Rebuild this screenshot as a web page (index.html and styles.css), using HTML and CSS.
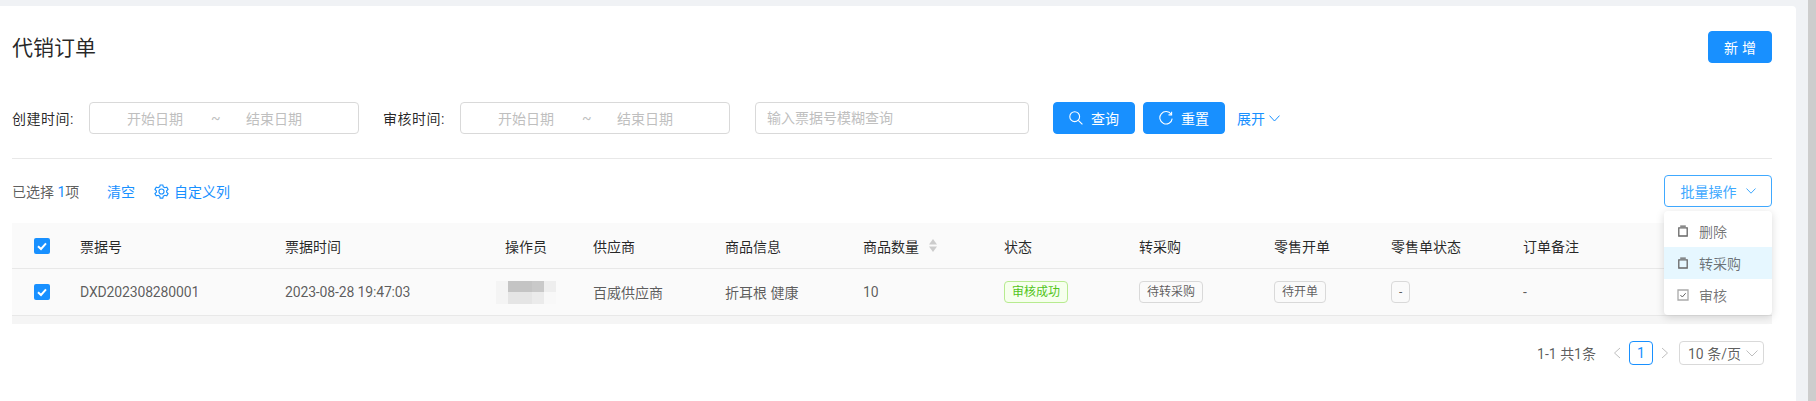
FILE: index.html
```html
<!DOCTYPE html>
<html lang="zh-CN">
<head>
    <meta charset="UTF-8">
    <meta name="viewport" content="width=device-width, initial-scale=1.0">
    <title>代销订单</title>
    <link rel="stylesheet" href="styles.css">
</head>
<body>
    <div class="page">
        <div class="main">
            <div class="card">
                <div class="title-row">
                    <h1 class="title">代销订单</h1>
                    <button class="btn btn-primary btn-add"><span class="spaced">新增</span></button>
                </div>

                <div class="filter-row">
                    <label class="filter-label">创建时间:</label>
                    <div class="range">
                        <span>开始日期</span><span class="tilde">~</span><span>结束日期</span>
                    </div>
                    <label class="filter-label">审核时间:</label>
                    <div class="range">
                        <span>开始日期</span><span class="tilde">~</span><span>结束日期</span>
                    </div>
                    <input class="search-input" type="text" placeholder="输入票据号模糊查询">
                    <button class="btn btn-primary btn-query">
                        <svg class="icon-14" viewBox="0 0 14 14"><circle cx="5.7" cy="5.7" r="4.9"/><path d="M9.3 9.3 13.4 13.4"/></svg>
                        查询
                    </button>
                    <button class="btn btn-primary btn-query">
                        <svg class="icon-14" viewBox="0 0 14 14"><path d="M12.2 3.3A6.2 6.2 0 1 0 13.2 7.6"/><path d="M12.6 0.8V3.9H9.5"/></svg>
                        重置
                    </button>
                    <a class="link expand">展开
                        <svg class="chevron-11" viewBox="0 0 11 7"><path d="M0.5 0.6 5.5 6 10.5 0.6"/></svg>
                    </a>
                </div>

                <div class="divider"></div>

                <div class="toolbar">
                    <div class="selection">已选择 <span class="count">1</span>项</div>
                    <a class="link clear">清空</a>
                    <a class="link columns">
                        <svg class="icon-gear" viewBox="0 0 16 16"><path d="M6.6 1H9.4L9.9 3 11.6 4 13.6 3.4 15 5.8 13.5 7.2V8.8L15 10.2 13.6 12.6 11.6 12 9.9 13 9.4 15H6.6L6.1 13 4.4 12 2.4 12.6 1 10.2 2.5 8.8V7.2L1 5.8 2.4 3.4 4.4 4 6.1 3Z"/><circle cx="8" cy="8" r="2.7"/></svg>
                        自定义列
                    </a>
                    <div class="batch">
                        <button class="btn btn-outline">批量操作
                            <svg class="chevron-9" viewBox="0 0 10 6"><path d="M0.5 0.5 5 5.2 9.5 0.5"/></svg>
                        </button>
                        <ul class="menu">
                            <li class="menu-item">
                                <svg class="menu-icon" viewBox="0 0 12 12"><path d="M3.2 1.2H8.8M1.8 2.8H10.2V11H1.8Z"/></svg>
                                删除
                            </li>
                            <li class="menu-item active">
                                <svg class="menu-icon" viewBox="0 0 12 12"><path d="M3.2 1.2H8.8M1.8 2.8H10.2V11H1.8Z"/></svg>
                                转采购
                            </li>
                            <li class="menu-item">
                                <svg class="menu-icon light" viewBox="0 0 12 12"><path d="M1 1H11V11H1Z"/><path class="tick" d="M3.4 6 5.3 8 8.7 4.2"/></svg>
                                审核
                            </li>
                        </ul>
                    </div>
                </div>

                <table class="orders">
                    <colgroup>
                        <col class="c1"><col class="c2"><col class="c3"><col class="c4"><col class="c5"><col class="c6">
                        <col class="c7"><col class="c8"><col class="c9"><col class="c10"><col class="c11"><col class="c12">
                    </colgroup>
                    <thead>
                        <tr>
                            <th class="check-cell"><span class="checkbox"><svg viewBox="0 0 16 16"><path d="M4 8.2 7 11 12 5.4"/></svg></span></th>
                            <th>票据号</th>
                            <th>票据时间</th>
                            <th>操作员</th>
                            <th>供应商</th>
                            <th>商品信息</th>
                            <th>
                                <span class="sort-head">商品数量
                                    <svg class="sorter" viewBox="0 0 8 13"><path d="M4 0 8 5.500H0Z"/><path d="M0 7.500H8L4 13Z"/></svg>
                                </span>
                            </th>
                            <th>状态</th>
                            <th>转采购</th>
                            <th>零售开单</th>
                            <th>零售单状态</th>
                            <th>订单备注</th>
                        </tr>
                    </thead>
                    <tbody>
                        <tr>
                            <td class="check-cell"><span class="checkbox"><svg viewBox="0 0 16 16"><path d="M4 8.2 7 11 12 5.4"/></svg></span></td>
                            <td class="latin">DXD202308280001</td>
                            <td class="latin">2023-08-28 19:47:03</td>
                            <td class="mosaic-cell">
                                <div class="mosaic">
                                    <i class="s1"></i><i class="s5"></i><i class="s5"></i><i class="s6"></i><i class="s2"></i>
                                    <i class="s1"></i><i class="s3"></i><i class="s3"></i><i class="s4"></i><i class="s7"></i>
                                </div>
                            </td>
                            <td>百威供应商</td>
                            <td>折耳根 健康</td>
                            <td class="latin">10</td>
                            <td><span class="tag tag-green">审核成功</span></td>
                            <td><span class="tag">待转采购</span></td>
                            <td><span class="tag">待开单</span></td>
                            <td><span class="tag">-</span></td>
                            <td>-</td>
                        </tr>
                    </tbody>
                </table>
                <div class="table-foot"></div>

                <div class="pager">
                    <span class="pager-total">1-1 共1条</span>
                    <svg class="pager-arrow prev" viewBox="0 0 8 12"><path d="M7 1 1.500 6 7 11"/></svg>
                    <span class="pager-num">1</span>
                    <svg class="pager-arrow" viewBox="0 0 8 12"><path d="M1 1 6.500 6 1 11"/></svg>
                    <span class="pager-size">10 条/页
                        <svg class="chevron-12" viewBox="0 0 12 7"><path d="M0.5 0.5 6 6 11.500 0.5"/></svg>
                    </span>
                </div>
            </div>
        </div>
        <div class="scrollbar"></div>
    </div>
</body>
</html>
```

FILE: styles.css
```css
* {
    box-sizing: border-box;
}

html, body {
    height: 401px;
    margin: 0;
    overflow: hidden;
}

body {
    background-color: #f0f2f5;
    font-family: Roboto, "Noto Sans CJK SC", sans-serif;
    font-size: 14px;
    color: rgba(0, 0, 0, 0.65);
}

svg {
    fill: none;
    stroke: currentColor;
}

.page {
    display: flex;
    height: 401px;
}

.main {
    flex: 1;
    padding: 6px 12px 0 0;
}

.scrollbar {
    width: 8px;
    background-color: #cdcdcd;
}

.card {
    height: 395px;
    padding: 25px 24px 0 12px;
    background-color: #fff;
    border-top-right-radius: 4px;
}

.title-row {
    display: flex;
    justify-content: space-between;
    align-items: center;
    height: 32px;
}

.title {
    margin: -2px 0 0;
    font-size: 21px;
    font-weight: 400;
    color: rgba(0, 0, 0, 0.85);
}

.btn {
    display: inline-flex;
    align-items: center;
    justify-content: center;
    height: 32px;
    border-radius: 4px;
    font-family: inherit;
    font-size: 14px;
    cursor: pointer;
}

.btn-primary {
    border: 1px solid #1890ff;
    background-color: #1890ff;
    color: #fff;
}

.btn-add {
    width: 64px;
}

.spaced {
    letter-spacing: 4px;
    margin-right: -4px;
}

.filter-row {
    display: flex;
    align-items: center;
    height: 32px;
    margin-top: 39px;
}

.filter-label {
    width: 60px;
    margin-right: 17px;
    color: rgba(0, 0, 0, 0.85);
    letter-spacing: 0.5px;
    white-space: nowrap;
}

.range {
    display: flex;
    align-items: center;
    gap: 28px;
    width: 270px;
    height: 32px;
    margin-right: 24px;
    padding-left: 37px;
    border: 1px solid #d9d9d9;
    border-radius: 4px;
    color: #bfbfbf;
}

.tilde {
    width: 7px;
}

.search-input {
    width: 274px;
    height: 32px;
    margin-left: 1px;
    padding: 0 11px;
    border: 1px solid #d9d9d9;
    border-radius: 4px;
    font-family: inherit;
    font-size: 14px;
}

.search-input::placeholder {
    color: #bfbfbf;
}

.btn-query {
    gap: 8px;
    width: 82px;
    margin-left: 8px;
}

.search-input + .btn-query {
    margin-left: 24px;
}

.icon-14 {
    width: 14px;
    height: 14px;
    stroke-width: 1.1;
}

.link {
    color: #1890ff;
}

.expand {
    display: inline-flex;
    align-items: center;
    gap: 4px;
    margin-left: 12px;
}

.chevron-11 {
    width: 11px;
    height: 7px;
}

.divider {
    height: 1px;
    margin-top: 24px;
    background-color: #e8e8e8;
}

.toolbar {
    display: flex;
    align-items: center;
    height: 32px;
    margin-top: 16px;
}

.selection {
    width: 95px;
}

.count {
    color: #1890ff;
}

.clear {
    width: 47px;
}

.columns {
    display: inline-flex;
    align-items: center;
    gap: 5px;
}

.icon-gear {
    width: 15px;
    height: 15px;
    stroke-width: 1.2;
}

.batch {
    position: relative;
    margin-left: auto;
}

.btn-outline {
    gap: 9px;
    width: 108px;
    border: 1px solid #40a9ff;
    background-color: #fff;
    color: #40a9ff;
}

.chevron-9 {
    width: 10px;
    height: 6px;
}

.menu {
    position: absolute;
    top: 36px;
    left: 0;
    z-index: 2;
    width: 108px;
    margin: 0;
    padding: 4px 0;
    list-style: none;
    background-color: #fff;
    border-radius: 4px;
    box-shadow: 0 2px 8px rgba(0, 0, 0, 0.15);
}

.menu-item {
    display: flex;
    align-items: center;
    gap: 10px;
    height: 32px;
    padding-left: 13px;
    color: rgba(0, 0, 0, 0.55);
}

.menu-item.active {
    background-color: #e6f7ff;
}

.menu-icon {
    width: 12px;
    height: 12px;
    stroke: #666;
    stroke-width: 1.3;
}

.menu-icon.light {
    stroke: #aaa;
}

.menu-icon .tick {
    stroke: #666;
    stroke-width: 1;
}

.orders {
    width: 1760px;
    margin-top: 16px;
    border-collapse: separate;
    border-spacing: 0;
    table-layout: fixed;
    background-color: #fafafa;
}

.c1 { width: 52px; }
.c2 { width: 205px; }
.c3 { width: 220px; }
.c4 { width: 88px; }
.c5 { width: 132px; }
.c6 { width: 138px; }
.c7 { width: 141px; }
.c8 { width: 135px; }
.c9 { width: 135px; }
.c10 { width: 117px; }
.c11 { width: 132px; }
.c12 { width: 265px; }

.orders th,
.orders td {
    padding: 0 0 0 16px;
    border-bottom: 1px solid #e8e8e8;
    text-align: left;
    font-weight: 400;
    white-space: nowrap;
}

.orders th {
    height: 46px;
    color: rgba(0, 0, 0, 0.85);
}

.orders td {
    height: 47px;
}

.orders .check-cell {
    padding-left: 22px;
}

.latin {
    letter-spacing: -0.15px;
}

.orders .mosaic-cell {
    padding-left: 7px;
}

.checkbox {
    display: block;
    width: 16px;
    height: 16px;
    border-radius: 2px;
    background-color: #1890ff;
}

.checkbox svg {
    display: block;
    stroke: #fff;
    stroke-width: 2;
}

.sort-head {
    display: inline-flex;
    align-items: center;
    gap: 10px;
}

.sorter {
    width: 8px;
    height: 13px;
    fill: #ccc;
    stroke: none;
}

.mosaic {
    display: grid;
    grid-template-columns: repeat(5, 12px);
    grid-auto-rows: 11.5px;
    width: 60px;
}

.s1 { background-color: #f4f4f4; }
.s2 { background-color: #eeeeee; }
.s3 { background-color: #e5e5e5; }
.s4 { background-color: #ebebeb; }
.s5 { background-color: #c4c4c4; }
.s6 { background-color: #c9c9c9; }
.s7 { background-color: #f8f8f8; }

.tag {
    display: inline-block;
    height: 22px;
    padding: 0 7px;
    border: 1px solid #d9d9d9;
    border-radius: 4px;
    background-color: #fafafa;
    font-size: 12px;
    line-height: 20px;
}

.tag-green {
    border-color: #b7eb8f;
    background-color: #f6ffed;
    color: #52c41a;
}

.table-foot {
    height: 8px;
    background-color: #f5f5f5;
}

.pager {
    display: flex;
    align-items: center;
    justify-content: flex-end;
    height: 24px;
    margin-top: 17px;
    padding-right: 8px;
}

.pager-total {
    margin-right: 17px;
}

.pager-arrow {
    width: 8px;
    height: 12px;
    stroke: #bfbfbf;
}

.pager-num {
    width: 24px;
    height: 24px;
    margin: 0 8px;
    border: 1px solid #1890ff;
    border-radius: 4px;
    color: #1890ff;
    text-align: center;
    line-height: 22px;
}

.pager-size {
    display: inline-flex;
    align-items: center;
    gap: 5px;
    width: 85px;
    height: 24px;
    margin-left: 10px;
    padding-left: 8px;
    border: 1px solid #d9d9d9;
    border-radius: 4px;
    white-space: nowrap;
}

.chevron-12 {
    width: 12px;
    height: 7px;
    stroke: #bfbfbf;
}
```
